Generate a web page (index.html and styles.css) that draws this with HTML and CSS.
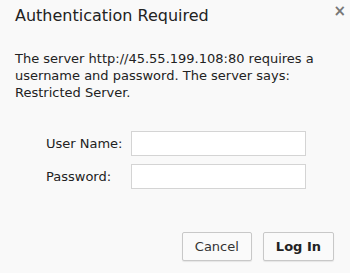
FILE: index.html
```html
<!DOCTYPE html>
<html>
<head>
<meta charset="utf-8">
<link rel="stylesheet" href="styles.css">
</head>
<body>
<div class="dialog">
  <div class="header">
    <h1 class="title">Authentication Required</h1>
    <span class="close">×</span>
  </div>
  <p class="message">The server http://45.55.199.108:80 requires a username and password. The server says: Restricted Server.</p>
  <div class="form">
    <label class="label">User Name:</label>
    <input class="field" type="text">
    <label class="label">Password:</label>
    <input class="field" type="password">
  </div>
  <div class="actions">
    <button class="btn">Cancel</button>
    <button class="btn primary">Log In</button>
  </div>
</div>
</body>
</html>
```
FILE: styles.css
```css
html, body {
  margin: 0;
  padding: 0;
  background: #f9f9f9;
}
.dialog {
  width: 350px;
  height: 273px;
  box-sizing: border-box;
  padding: 0 16px 0 15px;
  font-family: "DejaVu Sans", sans-serif;
  color: #222;
  display: flex;
  flex-direction: column;
}
.header {
  display: flex;
  justify-content: space-between;
  align-items: flex-start;
  padding-top: 5px;
}
.title {
  margin: 0;
  font-size: 16px;
  font-weight: normal;
  line-height: 22px;
}
.close {
  font-size: 15px;
  line-height: 12px;
  color: #777;
  font-weight: bold;
  margin-right: -12px;
  margin-top: 0;
}
.message {
  margin: 23px 0 0;
  font-size: 13px;
  line-height: 17px;
}
.form {
  margin: 30px 0 0 31px;
  display: grid;
  grid-template-columns: 85px 175px;
  row-gap: 8px;
  align-items: center;
}
.label {
  font-size: 13px;
}
.field {
  width: 175px;
  height: 25px;
  box-sizing: border-box;
  border: 1px solid #d4d4d4;
  background: #fff;
  margin: 0;
  padding: 0 4px;
}
.actions {
  display: flex;
  justify-content: flex-end;
  gap: 11px;
  margin-top: 43px;
  margin-right: 0;
}
.btn {
  height: 29px;
  min-width: 70px;
  box-sizing: border-box;
  border: 1px solid #c8c8c8;
  border-radius: 2px;
  background: #fafafa;
  box-shadow: 0 1px 1px rgba(0,0,0,0.08);
  font-family: "DejaVu Sans", sans-serif;
  font-size: 13px;
  color: #333;
  padding: 0 12px;
}
.primary {
  font-weight: bold;
  color: #222;
}
```
